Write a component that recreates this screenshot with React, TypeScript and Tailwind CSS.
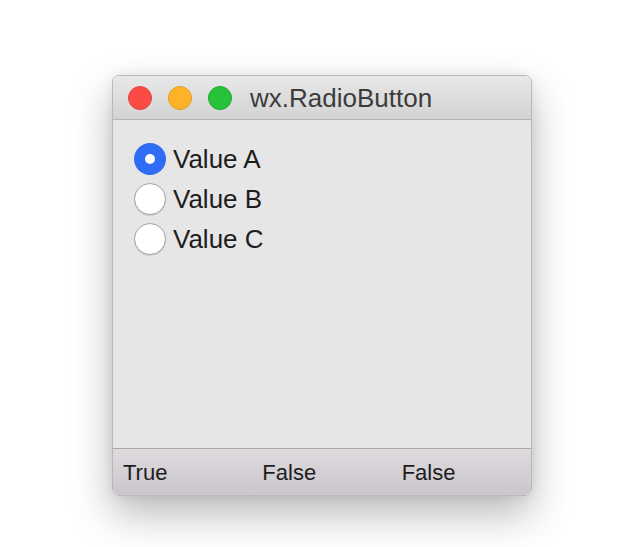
import React from 'react';

const font = { fontFamily: '"Liberation Sans", Arial, sans-serif' };

function Radio({ checked, label }: { checked?: boolean; label: string }) {
  return (
    <div className="flex h-10 items-center gap-[7px]">
      {checked ? (
        <span className="flex h-8 w-8 items-center justify-center rounded-full bg-[#2f6df4]">
          <span className="h-[10px] w-[10px] rounded-full bg-white" />
        </span>
      ) : (
        <span className="h-8 w-8 rounded-full border border-[#a3a3a3] bg-white shadow-[0_1px_1px_rgba(0,0,0,0.12)]" />
      )}
      <span className="text-[26px] leading-none text-[#1d1d1d]">{label}</span>
    </div>
  );
}

export default function App() {
  return (
    <div className="h-[547px] w-[644px] overflow-hidden bg-white pl-[112px] pt-[75px]" style={font}>
      <div className="flex h-[421px] w-[420px] flex-col overflow-hidden rounded-[7px] border border-[#b8b8b8] shadow-[0_18px_40px_rgba(0,0,0,0.28),0_0_12px_rgba(0,0,0,0.08)]">
        <div className="flex h-[44px] shrink-0 items-center border-b border-[#b5b5b5] bg-gradient-to-b from-[#e8e8e8] to-[#d3d3d3] pl-[15px]">
          <div className="flex gap-4">
            <span className="h-6 w-6 rounded-full border border-[#e0443e] bg-[#fc4a44]" />
            <span className="h-6 w-6 rounded-full border border-[#dea123] bg-[#fdb228]" />
            <span className="h-6 w-6 rounded-full border border-[#1aab29] bg-[#27c23b]" />
          </div>
          <span className="ml-[18px] text-[26px] leading-none text-[#3c3c3c]">wx.RadioButton</span>
        </div>
        <div className="flex-1 bg-[#e6e6e6] pl-[21px] pt-[19px]">
          <Radio checked label="Value A" />
          <Radio label="Value B" />
          <Radio label="Value C" />
        </div>
        <div className="flex h-[47px] shrink-0 items-center border-t border-[#a8a8a8] bg-gradient-to-b from-[#dedade] to-[#cac6cb] text-[22px] text-[#1d1d1d]">
          <span className="w-[140px] pl-[10px]">True</span>
          <span className="w-[140px] pl-[10px]">False</span>
          <span className="w-[140px] pl-[10px]">False</span>
        </div>
      </div>
    </div>
  );
}
